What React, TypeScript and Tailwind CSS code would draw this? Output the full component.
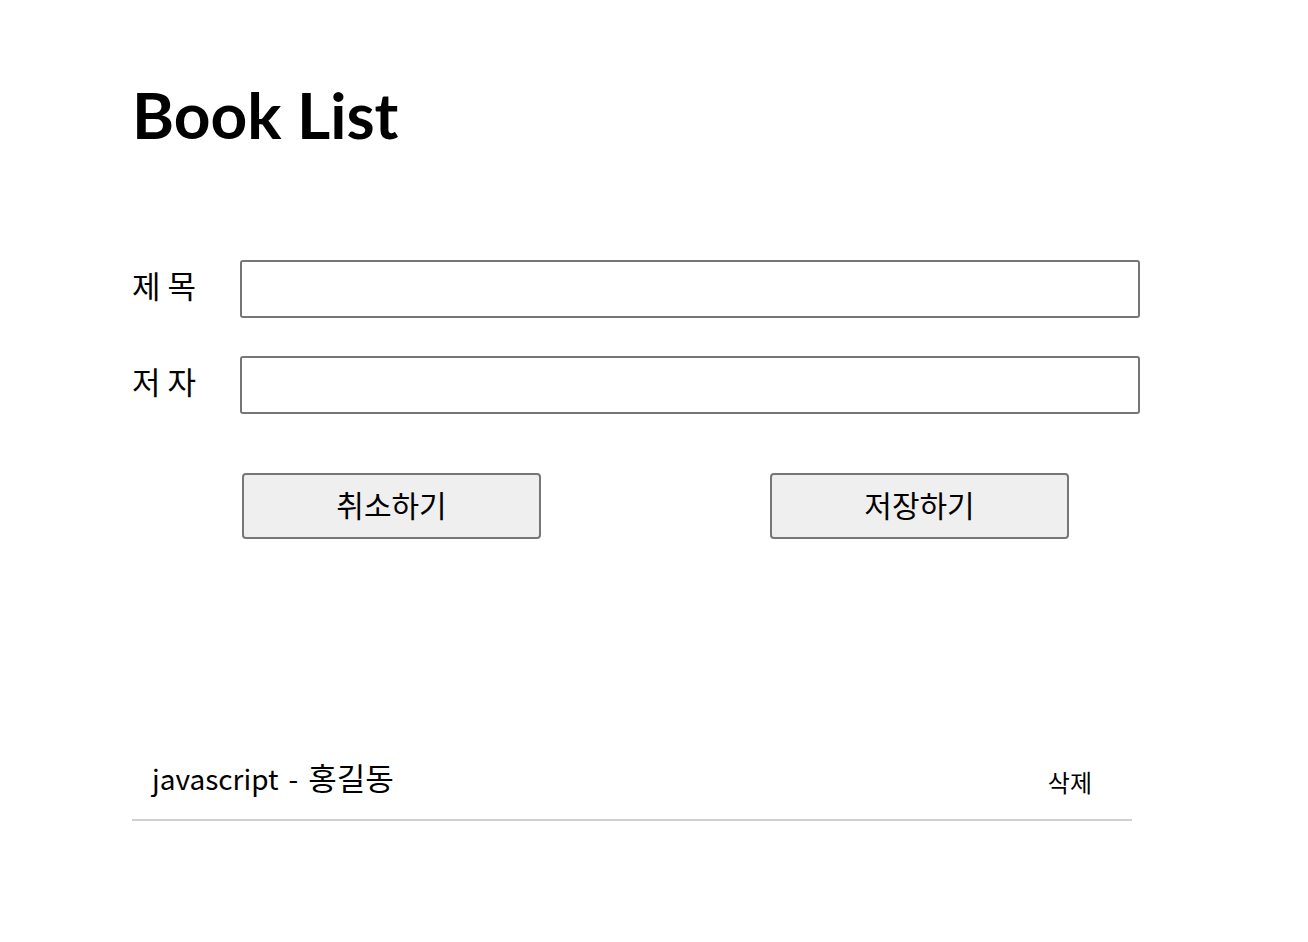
import { useState } from 'react';

type Book = {
    id: number;
    title: string;
    author: string;
};

export default function App() {
    const [title, setTitle] = useState('');
    const [author, setAuthor] = useState('');
    const [books, setBooks] = useState<Book[]>([{ id: 1, title: 'javascript', author: '홍길동' }]);

    const handleSave = () => {
        if (!title || !author) return;
        setBooks([...books, { id: Date.now(), title, author }]);
        setTitle('');
        setAuthor('');
    };

    const handleCancel = () => {
        setTitle('');
        setAuthor('');
    };

    return (
        <div className="min-h-screen bg-white pl-[132px] pt-[83px] text-black" style={{ fontFamily: '"Noto Sans CJK KR", "Noto Sans", sans-serif' }}>
            <h1 className="text-[64px] leading-none font-bold" style={{ fontFamily: 'Lato, "Noto Sans CJK KR", sans-serif' }}>
                Book List
            </h1>

            <div className="mt-[113px]">
                <div className="flex items-center">
                    <label className="w-[108px] pb-[8px] text-[31px]">제 목</label>
                    <input
                        value={title}
                        onChange={(e) => setTitle(e.target.value)}
                        className="h-[58px] w-[900px] rounded-[3px] border-2 border-[#767676] px-2 text-[28px] outline-none"
                    />
                </div>
                <div className="mt-[38px] flex items-center">
                    <label className="w-[108px] pb-[8px] text-[31px]">저 자</label>
                    <input
                        value={author}
                        onChange={(e) => setAuthor(e.target.value)}
                        className="h-[58px] w-[900px] rounded-[3px] border-2 border-[#767676] px-2 text-[28px] outline-none"
                    />
                </div>
                <div className="mt-[59px] flex gap-[229px] pl-[110px]">
                    <button onClick={handleCancel} className="h-[66px] w-[299px] rounded-[4px] border-2 border-[#767676] bg-[#efefef] pb-[4px] text-[30px]">
                        취소하기
                    </button>
                    <button onClick={handleSave} className="h-[66px] w-[299px] rounded-[4px] border-2 border-[#767676] bg-[#efefef] pb-[4px] text-[30px]">
                        저장하기
                    </button>
                </div>
            </div>

            <ul className="mt-[202px] w-[1000px]">
                {books.map((book) => (
                    <li key={book.id} className="flex h-[80px] items-center justify-between border-b-2 border-[#d0d0d0] pr-[40px] pb-[6px] pl-[20px]">
                        <span className="text-[28px]">
                            {book.title}
                            <span className="mx-[10px]">-</span>
                            <span className="text-[31px]">{book.author}</span>
                        </span>
                        <button onClick={() => setBooks(books.filter((b) => b.id !== book.id))} className="pt-[10px] text-[24px]">
                            삭제
                        </button>
                    </li>
                ))}
            </ul>
        </div>
    );
}
